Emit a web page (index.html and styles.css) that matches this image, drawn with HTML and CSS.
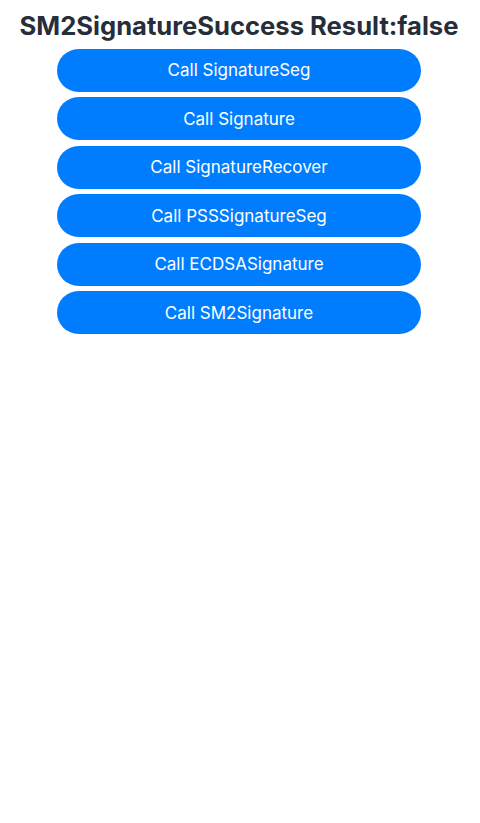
FILE: index.html
```html
<!DOCTYPE html>
<html>
<head>
<meta charset="utf-8">
<link rel="stylesheet" href="styles.css">
</head>
<body>
<div class="page">
  <h1 class="title">SM2SignatureSuccess Result:false</h1>
  <div class="buttons">
    <button class="btn">Call SignatureSeg</button>
    <button class="btn">Call Signature</button>
    <button class="btn">Call SignatureRecover</button>
    <button class="btn">Call PSSSignatureSeg</button>
    <button class="btn">Call ECDSASignature</button>
    <button class="btn">Call SM2Signature</button>
  </div>
</div>
</body>
</html>
```
FILE: styles.css
```css
html, body {
  margin: 0;
  padding: 0;
  background: #ffffff;
}
.page {
  width: 478px;
  display: flex;
  flex-direction: column;
  align-items: center;
  font-family: "Inter", "Noto Sans", sans-serif;
}
.title {
  margin: 0;
  padding-top: 9px;
  height: 39px;
  line-height: 34px;
  font-size: 25.6px;
  font-weight: 700;
  color: #262e39;
  white-space: nowrap;
}
.buttons {
  display: flex;
  flex-direction: column;
  gap: 5.5px;
  margin-top: 0.5px;
}
.btn {
  width: 364px;
  height: 43px;
  border: none;
  border-radius: 22px;
  background: #007dff;
  color: #ffffff;
  font-family: "Inter", "Noto Sans", sans-serif;
  font-size: 17px;
  font-weight: 400;
  padding: 0;
}
```
